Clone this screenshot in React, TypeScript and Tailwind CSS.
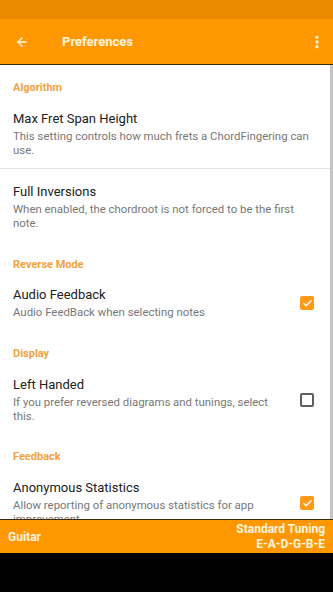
import { ArrowLeft, EllipsisVertical, Check } from 'lucide-react';

interface Pref {
  title: string;
  desc: string;
  check?: boolean;
  className: string;
}

function Header({ label, className }: { label: string; className: string }) {
  return (
    <div className={`pl-[13px] text-[11px] font-bold leading-[14px] text-[#f4a23c] ${className}`}>
      {label}
    </div>
  );
}

function Item({ title, desc, check, className }: Pref) {
  return (
    <div className={`flex items-center pl-[13px] pr-[16px] ${className}`}>
      <div className={`flex-1 min-w-0 ${check === undefined ? '' : 'pr-[12px]'}`}>
        <div className="text-[13px] leading-[16px] text-[#212121]">{title}</div>
        <div className="mt-[2px] text-[11.4px] leading-[14px] text-[#777777]">{desc}</div>
      </div>
      {check === true && (
        <div className="w-[14px] h-[14px] rounded-[2px] bg-[#ff9a1a] flex items-center justify-center shrink-0">
          <Check className="w-[11px] h-[11px] text-white" strokeWidth={3} />
        </div>
      )}
      {check === false && (
        <div className="w-[14px] h-[14px] rounded-[2px] border-2 border-[#5f5f5f] shrink-0" />
      )}
    </div>
  );
}

export default function App() {
  return (
    <div className="w-[333px] h-[592px] flex flex-col overflow-hidden bg-white" style={{ fontFamily: 'Roboto, "Noto Sans", sans-serif' }}>
      <div className="h-[19px] bg-[#ea8c00] shrink-0" />
      <div className="h-[45px] bg-[#ff9800] flex items-center shrink-0 pl-[15px] pr-[8px]">
        <ArrowLeft className="w-[14px] h-[14px] text-[#fff6e0]" strokeWidth={2.5} />
        <div className="ml-[33px] text-[13px] font-bold text-[#fff6e0]">Preferences</div>
        <div className="flex-1" />
        <EllipsisVertical className="w-[16px] h-[16px] text-[#fff6e0]" strokeWidth={3} />
      </div>
      <div className="h-[1px] bg-[#3a2a10] shrink-0" />
      <div className="h-[454px] flex shrink-0 overflow-hidden">
        <div className="flex-1 overflow-hidden">
          <Header label="Algorithm" className="pt-[16px]" />
          <Item
            title="Max Fret Span Height"
            desc="This setting controls how much frets a ChordFingering can use."
            className="pt-[16px] pb-[11px]"
          />
          <div className="h-[1px] bg-[#e2e2e2]" />
          <Item
            title="Full Inversions"
            desc="When enabled, the chordroot is not forced to be the first note."
            className="pt-[15px] pb-[13px]"
          />
          <Header label="Reverse Mode" className="pt-[15px]" />
          <Item
            title="Audio Feedback"
            desc="Audio FeedBack when selecting notes"
            check={true}
            className="pt-[15px] pb-[12px]"
          />
          <Header label="Display" className="pt-[16px]" />
          <Item
            title="Left Handed"
            desc="If you prefer reversed diagrams and tunings, select this."
            check={false}
            className="pt-[16px] pb-[12px]"
          />
          <Header label="Feedback" className="pt-[15px]" />
          <Item
            title="Anonymous Statistics"
            desc="Allow reporting of anonymous statistics for app improvement"
            check={true}
            className="pt-[16px] pb-[12px]"
          />
        </div>
        <div className="w-[3px] bg-[#c4c4c4]" />
      </div>
      <div className="h-[1px] bg-[#3a2a10] shrink-0" />
      <div className="h-[33px] bg-[#ff9800] flex items-center justify-between px-[8px] shrink-0 text-[12px] font-bold text-[#fff6e0]">
        <div>Guitar</div>
        <div className="text-right leading-[15px]">
          <div>Standard Tuning</div>
          <div>E-A-D-G-B-E</div>
        </div>
      </div>
      <div className="flex-1 bg-black" />
    </div>
  );
}
